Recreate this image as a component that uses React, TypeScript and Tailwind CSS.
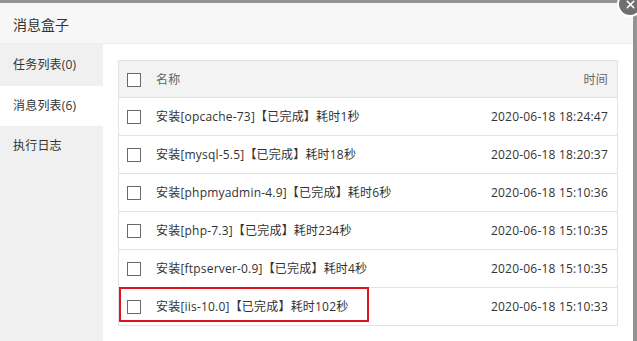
import { X } from "lucide-react";

type Message = {
  name: string;
  time: string;
  marked?: boolean;
};

const messages: Message[] = [
  { name: "安装[opcache-73]【已完成】耗时1秒", time: "2020-06-18 18:24:47" },
  { name: "安装[mysql-5.5]【已完成】耗时18秒", time: "2020-06-18 18:20:37" },
  { name: "安装[phpmyadmin-4.9]【已完成】耗时6秒", time: "2020-06-18 15:10:36" },
  { name: "安装[php-7.3]【已完成】耗时234秒", time: "2020-06-18 15:10:35" },
  { name: "安装[ftpserver-0.9]【已完成】耗时4秒", time: "2020-06-18 15:10:35" },
  { name: "安装[iis-10.0]【已完成】耗时102秒", time: "2020-06-18 15:10:33", marked: true },
];

const tabs = [
  { label: "任务列表(0)", active: false },
  { label: "消息列表(6)", active: true },
  { label: "执行日志", active: false },
];

function Checkbox() {
  return <span className="block size-[14px] shrink-0 border border-[#6a6a6a] bg-white" />;
}

export default function App() {
  return (
    <div
      className="h-[341px] w-[637px] overflow-hidden bg-[#939393] pt-[3px] pr-[4px]"
      style={{ fontFamily: '"Open Sans", "Noto Sans CJK SC", sans-serif' }}
    >
      <div className="relative flex h-full flex-col bg-white">
        <div className="flex h-[41px] shrink-0 items-center border-b border-[#ececec] bg-[#f7f7f7] pl-[13px] pt-[2px] text-[14px] text-[#333]">
          消息盒子
        </div>

        <div className="flex min-h-0 flex-1">
          <div className="w-[103px] shrink-0 bg-[#f0f0f0] pt-px">
            {tabs.map((tab) => (
              <div
                key={tab.label}
                className={`flex h-[40.5px] items-center pl-[13px] text-[12px] tracking-[0.2px] text-[#333] ${tab.active ? "bg-white" : ""}`}
              >
                {tab.label}
              </div>
            ))}
          </div>

          <div className="flex-1 px-[15px] pt-[16px]">
            <div className="border border-b-0 border-[#e2e2e2] tracking-[0.2px]">
              <div className="flex h-[37px] items-center border-b border-[#e2e2e2] bg-[#f3f3f3] pl-[8px] pr-[9px] pt-[2px] text-[12px] text-[#666]">
                <Checkbox />
                <span className="ml-[15px] flex-1">名称</span>
                <span>时间</span>
              </div>
              {messages.map((msg) => (
                <div
                  key={msg.name}
                  className="relative flex h-[38px] items-center border-b border-[#e2e2e2] pl-[8px] pr-[9px] text-[12px] text-[#333]"
                >
                  <Checkbox />
                  <span className="ml-[15px] flex-1">{msg.name}</span>
                  <span>{msg.time}</span>
                  {msg.marked ? (
                    <span className="absolute left-0 top-[-1px] h-[35px] w-[250px] border-2 border-[#e3131d]" />
                  ) : null}
                </div>
              ))}
            </div>
          </div>
        </div>

        <div className="absolute right-[-10px] top-[-12px] grid size-[26px] place-items-center rounded-full border-2 border-white bg-[#6f6f6f]">
          <X className="size-[13px] text-white" strokeWidth={3} aria-hidden="true" />
        </div>
      </div>
    </div>
  );
}
